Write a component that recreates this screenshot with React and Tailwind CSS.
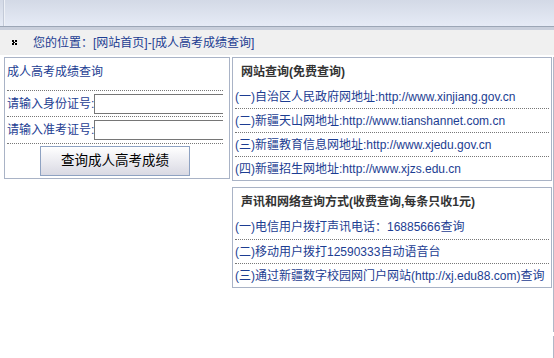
import React from "react";

const font = "font-['Liberation_Sans','Noto_Sans_CJK_SC',sans-serif]";

const freeLinks = [
  "(一)自治区人民政府网地址:http://www.xinjiang.gov.cn",
  "(二)新疆天山网地址:http://www.tianshannet.com.cn",
  "(三)新疆教育信息网地址:http://www.xjedu.gov.cn",
  "(四)新疆招生网地址:http://www.xjzs.edu.cn",
];

const paidWays = [
  "(一)电信用户拨打声讯电话：16885666查询",
  "(二)移动用户拨打12590333自动语音台",
  "(三)通过新疆数字校园网门户网站(http://xj.edu88.com)查询",
];

function Bullet() {
  return (
    <svg width="5" height="5" viewBox="0 0 5 5" className="block">
      <rect x="0" y="0" width="2" height="2" fill="#000" />
      <rect x="3" y="0" width="2" height="2" fill="#000" />
      <rect x="1" y="2" width="2" height="1" fill="#000" />
      <rect x="0" y="3" width="2" height="2" fill="#000" />
      <rect x="3" y="3" width="2" height="2" fill="#000" />
    </svg>
  );
}

function InfoPanel({ title, rows, heights, titleH }) {
  return (
    <div className="border border-[#a9b3c6] bg-white">
      <div
        className="flex items-center pl-[8px] font-bold text-[#333] text-[12px]"
        style={{ height: titleH }}
      >
        {title}
      </div>
      {rows.map((r, i) => (
        <div
          key={i}
          className={
            "mx-[2px] flex items-center text-[12px] text-[#1c3d92] whitespace-nowrap " +
            (i < rows.length - 1 ? "border-b border-dotted border-[#777]" : "")
          }
          style={{ height: heights[i] }}
        >
          {r}
        </div>
      ))}
    </div>
  );
}

export default function App() {
  return (
    <div className={`w-[554px] h-[358px] bg-white overflow-hidden ${font}`}>
      {/* top bar */}
      <div className="h-[27px] bg-gradient-to-b from-[#d3d9e6] to-[#e6ebf6] border-b border-[#9ca6b6] pl-[3px]">
        <div className="h-full w-[2px] border-l border-[#c3cad8] bg-[#eef1f7]" />
      </div>
      <div className="h-[3px] bg-[#c9cfdc]" />

      {/* breadcrumb */}
      <div className="h-[25px] bg-[#f0f0f0] flex items-center">
        <div className="pl-[12px] w-[33px]">
          <Bullet />
        </div>
        <span className="text-[12px] text-[#1c3d92]">
          您的位置：[网站首页]-[成人高考成绩查询]
        </span>
      </div>

      {/* body */}
      <div className="mt-[2px] h-[275px] flex pl-[4px] border-r border-[#b0b8c8] w-[554px]">
        {/* left form */}
        <div className="w-[226px] h-[122px] border border-[#a9b3c6] pl-[2px] pr-[6px]">
          <div className="h-[33px] pt-[6px] leading-[16px] border-b border-dotted border-[#777] text-[12px] text-[#1c3d92]">
            成人高考成绩查询
          </div>
          <div className="h-[26px] flex items-center overflow-hidden border-b border-dotted border-[#777]">
            <span className="text-[12px] text-[#1c3d92] whitespace-nowrap">请输入身份证号:</span>
            <input className="h-[20px] w-[160px] shrink-0 border border-[#767676] bg-white" />
          </div>
          <div className="h-[27px] flex items-center overflow-hidden border-b border-dotted border-[#777]">
            <span className="text-[12px] text-[#1c3d92] whitespace-nowrap">请输入准考证号:</span>
            <input className="h-[20px] w-[160px] shrink-0 border border-[#767676] bg-white" />
          </div>
          <div className="pt-[2px] pl-[33px]">
            <button className="w-[150px] h-[30px] border border-[#8ea2c2] bg-gradient-to-b from-white to-[#d9d9e3] text-[13.5px] text-black">
              查询成人高考成绩
            </button>
          </div>
        </div>

        {/* right info */}
        <div className="ml-[2px] w-[320px] flex flex-col gap-[6px]">
          <InfoPanel
            title="网站查询(免费查询)"
            rows={freeLinks}
            heights={[24, 24, 24, 23]}
            titleH={27}
          />
          <InfoPanel
            title="声讯和网络查询方式(收费查询,每条只收1元)"
            rows={paidWays}
            heights={[25, 24, 23]}
            titleH={27}
          />
        </div>
      </div>
      <div className="mt-[4px] h-[30px] border-r border-[#b0b8c8] w-[554px]" />
    </div>
  );
}
